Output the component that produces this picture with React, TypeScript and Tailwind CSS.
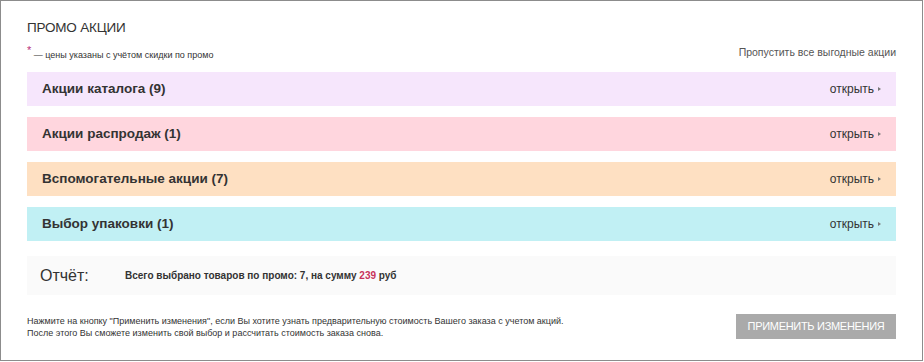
const groups = [
  { title: "Акции каталога (9)", bg: "bg-[#f6e6fc]" },
  { title: "Акции распродаж (1)", bg: "bg-[#ffd6de]" },
  { title: "Вспомогательные акции (7)", bg: "bg-[#fee0c2]" },
  { title: "Выбор упаковки (1)", bg: "bg-[#c1f0f4]" },
]

function PromoBar({ title, bg }: { title: string; bg: string }) {
  return (
    <div className={`flex h-[34px] items-center justify-between pl-[15px] pr-[15px] ${bg}`}>
      <span className="text-[13.5px] font-bold text-[#333]">{title}</span>
      <span className="flex items-center text-[12px] text-[#333]">
        открыть
        <span className="ml-[4px] h-0 w-0 border-y-[2px] border-l-[3px] border-y-transparent border-l-[#777]" />
      </span>
    </div>
  )
}

export default function App() {
  return (
    <div
      className="h-[361px] w-[923px] border border-[#8c8c8c] bg-white px-[26px] pt-[19px] text-[#333]"
      style={{ fontFamily: '"Liberation Sans", Arial, sans-serif' }}
    >
      <div className="h-[16px] text-[13.5px] leading-[16px] uppercase tracking-[-0.2px]">
        Промо акции
      </div>

      <div className="mt-[8px] flex h-[16px] items-start justify-between">
        <div className="mt-[1px] text-[9px] leading-[12px]">
          <span className="align-super text-[11px] leading-none text-[#b8307a]">*</span> — цены
          указаны с учётом скидки по промо
        </div>
        <div className="mt-[2px] whitespace-nowrap text-[10.5px] leading-[13px] text-[#555]">
          Пропустить все выгодные акции
        </div>
      </div>

      <div className="mt-[12px] flex flex-col gap-[11px]">
        {groups.map((g) => (
          <PromoBar key={g.title} title={g.title} bg={g.bg} />
        ))}
      </div>

      <div className="mt-[15px] flex h-[39px] items-center bg-[#fafafa] pl-[13px]">
        <span className="w-[85px] text-[16px] font-light">Отчёт:</span>
        <span className="text-[10px] font-bold">
          Всего выбрано товаров по промо: 7, на сумму{" "}
          <span className="text-[#c8325a]">239</span> руб
        </span>
      </div>

      <div className="mt-[19px] flex items-start justify-between">
        <p className="mt-[1px] text-[9px] leading-[12px]">
          Нажмите на кнопку "Применить изменения", если Вы хотите узнать предварительную
          стоимость Вашего заказа с учетом акций.
          <br />
          После этого Вы сможете изменить свой выбор и рассчитать стоимость заказа снова.
        </p>
        <button className="h-[25px] w-[160px] bg-[#aaaaaa] text-[11px] uppercase text-white tracking-[-0.3px]">
          Применить изменения
        </button>
      </div>
    </div>
  )
}
